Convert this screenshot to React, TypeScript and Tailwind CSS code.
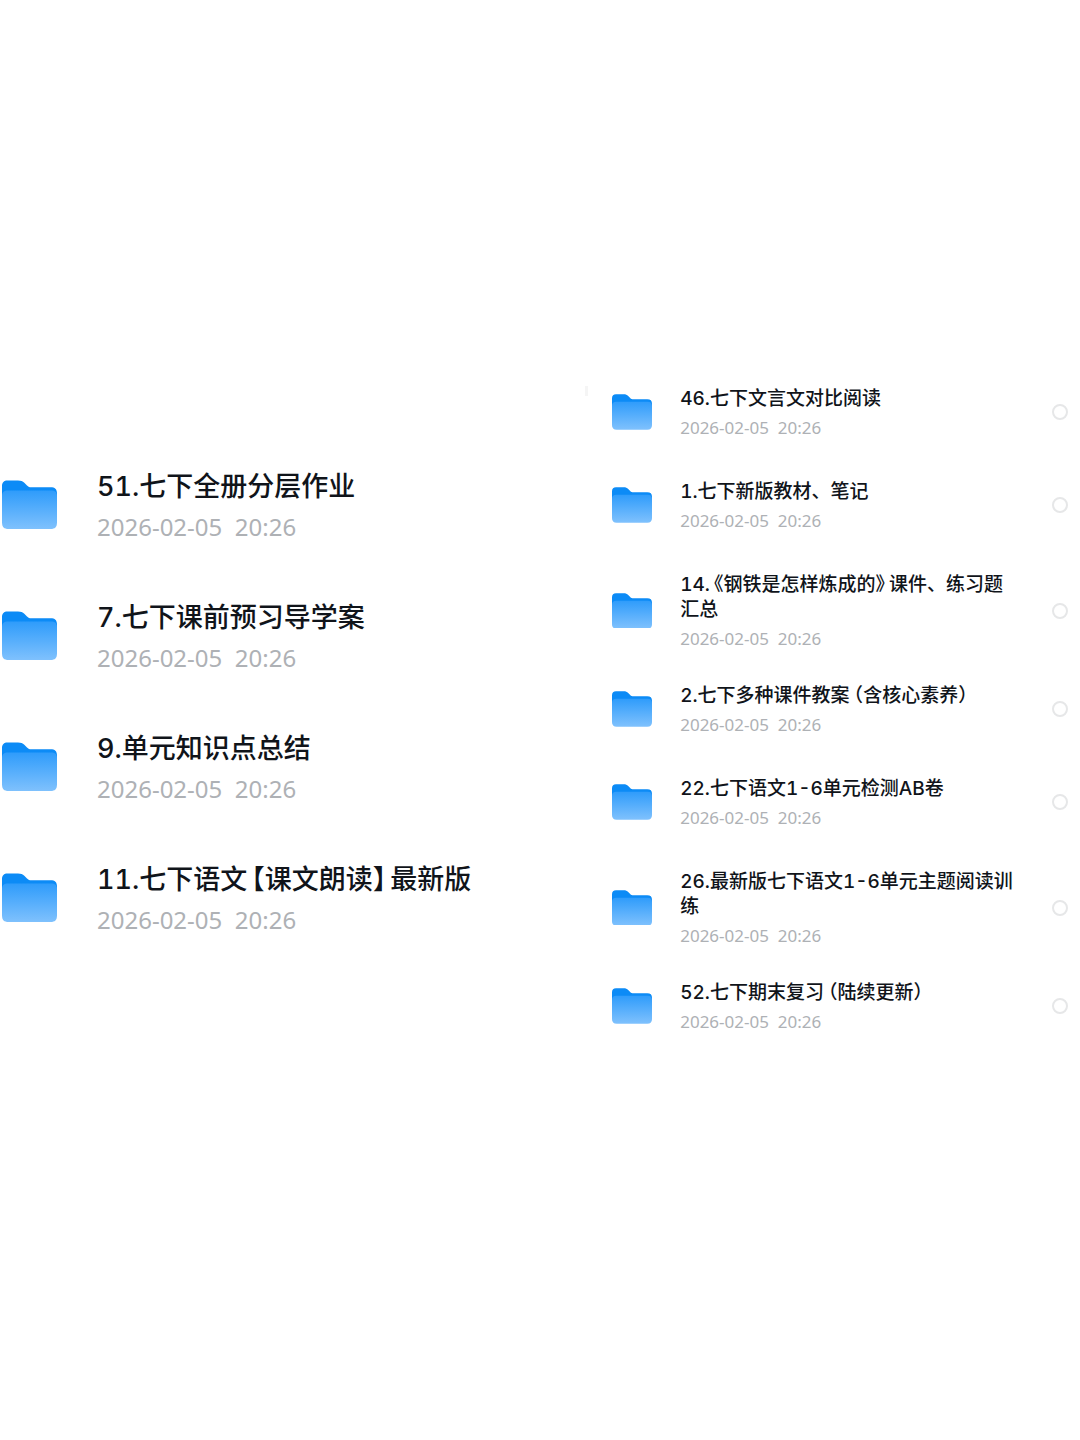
import { Fragment, useId } from 'react'

const date = '2026-02-05  20:26'

const recentFolders = [
  '51.七下全册分层作业',
  '7.七下课前预习导学案',
  '9.单元知识点总结',
  '11.七下语文【课文朗读】最新版',
]

const folders = [
  { name: '46.七下文言文对比阅读' },
  { name: '1.七下新版教材、笔记' },
  { name: '14.《钢铁是怎样炼成的》课件、练习题汇总', tall: true },
  { name: '2.七下多种课件教案（含核心素养）' },
  { name: '22.七下语文1-6单元检测AB卷' },
  { name: '26.最新版七下语文1-6单元主题阅读训练', tall: true },
  { name: '52.七下期末复习（陆续更新）' },
]

function FolderIcon({ className }: { className: string }) {
  const id = useId()

  return (
    <svg viewBox="0 0 55 49" className={className} aria-hidden="true">
      <defs>
        <linearGradient id={id} x1="0" y1="0" x2="0" y2="1">
          <stop offset="0" stopColor="#2f9cfb" />
          <stop offset="1" stopColor="#7fc1fd" />
        </linearGradient>
      </defs>
      <path
        d="M0 6C0 2.5 2 0.5 5.5 0.5H16C19 0.5 20.6 1.2 22.3 2.8L25 5.4C26.4 6.8 27.4 7.2 29.5 7.2H48.5C53 7.2 55 9 55 13.5V30H0Z"
        fill="#0c8bf6"
      />
      <path
        d="M0 16C0 12.2 2 10.6 6 10.6H49C53 10.6 55 12.2 55 16V42.5C55 47 53 49 48.5 49H6.5C2 49 0 47 0 42.5Z"
        fill={`url(#${id})`}
      />
    </svg>
  )
}

// Brackets are set half width, with a little air on their outer side
function FolderName({ name }: { name: string }) {
  return name.split(/([《【（》】）])/).map((part, index) => {
    if (/^[《【（]$/.test(part)) {
      return <span key={index} className="ml-1 [font-feature-settings:'halt']">{part}</span>
    }
    if (/^[》】）]$/.test(part)) {
      return <span key={index} className="mr-1 [font-feature-settings:'halt']">{part}</span>
    }
    return <Fragment key={index}>{part}</Fragment>
  })
}

export default function App() {
  return (
    <main
      lang="zh-CN"
      className="grid min-h-screen grid-cols-[54fr_46fr] items-start bg-white pt-[386px] font-['Inter','Noto_Sans_CJK_SC',sans-serif] text-[#10141a] tabular-nums"
    >
      {/* Large list */}
      <ul className="flex flex-col gap-[58px] pt-[82px] pl-0.5">
        {recentFolders.map((name) => (
          <li key={name} className="flex items-center gap-10">
            <FolderIcon className="w-[55px] shrink-0" />
            <div>
              <h2 className="text-[27px] leading-[38px] font-medium"><FolderName name={name} /></h2>
              <p className="mt-[7px] font-['Noto_Sans',sans-serif] text-2xl leading-7 whitespace-pre text-[#aeb1b5]">{date}</p>
            </div>
          </li>
        ))}
      </ul>

      {/* Selectable list */}
      <div className="flex items-start pl-0.5">
        <div className="h-2.5 w-[3px] shrink-0 bg-neutral-100" />
        <ul className="grow pr-3 pl-6">
          {folders.map(({ name, tall }) => (
            <li key={name} className={tall ? 'mb-[34px]' : 'mb-[41px]'}>
              <label className="flex items-center">
                <FolderIcon className="mr-7 w-10 shrink-0" />
                <span className="mr-9 block grow">
                  <span className="block text-[19px] leading-[25px] font-medium"><FolderName name={name} /></span>
                  <span className="mt-[7px] block font-['Noto_Sans',sans-serif] text-[17px] leading-5 whitespace-pre text-[#aeb1b5]">{date}</span>
                </span>
                <input
                  type="checkbox"
                  className="size-4 shrink-0 appearance-none rounded-full border-2 border-[#e6e7e8] checked:border-[#0c8bf6] checked:bg-[#0c8bf6]"
                />
              </label>
            </li>
          ))}
        </ul>
      </div>
    </main>
  )
}
